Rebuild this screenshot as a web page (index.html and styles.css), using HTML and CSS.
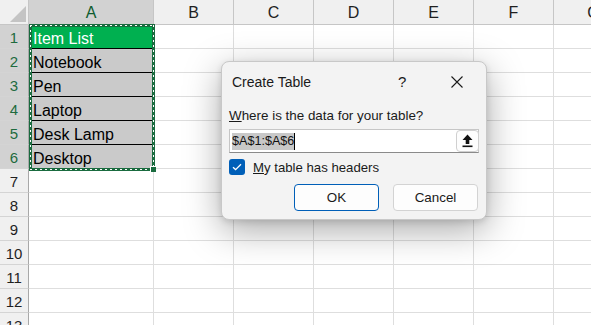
FILE: index.html
```html
<!DOCTYPE html>
<html>
<head>
<meta charset="utf-8">
<link rel="stylesheet" href="styles.css">
</head>
<body>
<div class="sheet">
  <div class="grid">
    <div class="corner"><svg width="29" height="25" viewBox="0 0 29 25"><polygon points="10,22 26,6 26,22" fill="#c4c4c4"/></svg></div>
    <div class="colhdr sel">A</div>
    <div class="colhdr">B</div>
    <div class="colhdr">C</div>
    <div class="colhdr">D</div>
    <div class="colhdr">E</div>
    <div class="colhdr">F</div>
    <div class="colhdr">G</div>

    <div class="rowhdr sel">1</div><div class="cell data head">Item List</div><div class="cell"></div><div class="cell"></div><div class="cell"></div><div class="cell"></div><div class="cell"></div><div class="cell"></div>
    <div class="rowhdr sel">2</div><div class="cell data">Notebook</div><div class="cell"></div><div class="cell"></div><div class="cell"></div><div class="cell"></div><div class="cell"></div><div class="cell"></div>
    <div class="rowhdr sel">3</div><div class="cell data">Pen</div><div class="cell"></div><div class="cell"></div><div class="cell"></div><div class="cell"></div><div class="cell"></div><div class="cell"></div>
    <div class="rowhdr sel">4</div><div class="cell data">Laptop</div><div class="cell"></div><div class="cell"></div><div class="cell"></div><div class="cell"></div><div class="cell"></div><div class="cell"></div>
    <div class="rowhdr sel">5</div><div class="cell data">Desk Lamp</div><div class="cell"></div><div class="cell"></div><div class="cell"></div><div class="cell"></div><div class="cell"></div><div class="cell"></div>
    <div class="rowhdr sel">6</div><div class="cell data last">Desktop</div><div class="cell"></div><div class="cell"></div><div class="cell"></div><div class="cell"></div><div class="cell"></div><div class="cell"></div>
    <div class="rowhdr">7</div><div class="cell"></div><div class="cell"></div><div class="cell"></div><div class="cell"></div><div class="cell"></div><div class="cell"></div><div class="cell"></div>
    <div class="rowhdr">8</div><div class="cell"></div><div class="cell"></div><div class="cell"></div><div class="cell"></div><div class="cell"></div><div class="cell"></div><div class="cell"></div>
    <div class="rowhdr">9</div><div class="cell"></div><div class="cell"></div><div class="cell"></div><div class="cell"></div><div class="cell"></div><div class="cell"></div><div class="cell"></div>
    <div class="rowhdr">10</div><div class="cell"></div><div class="cell"></div><div class="cell"></div><div class="cell"></div><div class="cell"></div><div class="cell"></div><div class="cell"></div>
    <div class="rowhdr">11</div><div class="cell"></div><div class="cell"></div><div class="cell"></div><div class="cell"></div><div class="cell"></div><div class="cell"></div><div class="cell"></div>
    <div class="rowhdr">12</div><div class="cell"></div><div class="cell"></div><div class="cell"></div><div class="cell"></div><div class="cell"></div><div class="cell"></div><div class="cell"></div>
    <div class="rowhdr">13</div><div class="cell"></div><div class="cell"></div><div class="cell"></div><div class="cell"></div><div class="cell"></div><div class="cell"></div><div class="cell"></div>
  </div>

  <div class="selection"><span class="handle"></span></div>

  <div class="dialog">
    <div class="titlebar">
      <span class="title">Create Table</span>
      <span class="help">?</span>
      <span class="close"><svg width="12" height="12" viewBox="0 0 12 12"><path d="M0.5 0.5 L11.5 11.5 M11.5 0.5 L0.5 11.5" stroke="#1a1a1a" stroke-width="1.1" fill="none"/></svg></span>
    </div>
    <div class="body">
      <div class="label"><u>W</u>here is the data for your table?</div>
      <div class="input">
        <span class="value"><span class="hl">$A$1:$A$6</span><span class="caret"></span></span>
        <span class="upbtn"><svg width="11" height="14" viewBox="0 0 11 14"><path d="M5.5 0.5 L10.5 6 L7.3 6 L7.3 10 L3.7 10 L3.7 6 L0.5 6 Z" fill="#111"/><rect x="0.5" y="11.5" width="10" height="1.6" fill="#111"/></svg></span>
      </div>
      <div class="check">
        <span class="box"><svg width="10" height="8" viewBox="0 0 10 8"><path d="M1 4.2 L3.6 6.6 L9 1.2" stroke="#fff" stroke-width="1.3" fill="none"/></svg></span>
        <span class="checklabel"><u>M</u>y table has headers</span>
      </div>
      <div class="buttons">
        <span class="btn primary">OK</span>
        <span class="btn">Cancel</span>
      </div>
    </div>
  </div>
</div>
</body>
</html>
```

FILE: styles.css
```css
html, body {
  margin: 0;
  padding: 0;
  background: #ffffff;
  overflow: hidden;
}

.sheet {
  position: relative;
  width: 591px;
  height: 325px;
  overflow: hidden;
}

.grid {
  display: grid;
  grid-template-columns: 29px 125px 80px 80px 80px 80px 80px 80px;
  grid-template-rows: 25px;
  grid-auto-rows: 24px;
  font-family: "Liberation Sans", Arial, sans-serif;
}

.corner {
  background: #f0f0f0;
  border-right: 1px solid #c6c6c6;
  border-bottom: 1px solid #c6c6c6;
  box-sizing: border-box;
}

.corner svg {
  display: block;
}

.colhdr {
  box-sizing: border-box;
  background: #f0f0f0;
  border-right: 1px solid #c6c6c6;
  border-bottom: 1px solid #c6c6c6;
  display: flex;
  align-items: center;
  justify-content: center;
  font-size: 16px;
  color: #1f1f1f;
  padding-top: 1px;
}

.colhdr.sel {
  background: #d2d2d2;
  color: #0e5c2f;
}

.rowhdr {
  box-sizing: border-box;
  background: #f0f0f0;
  border-right: 1px solid #a8a8a8;
  border-bottom: 1px solid #d4d4d4;
  display: flex;
  align-items: center;
  justify-content: center;
  font-size: 15px;
  color: #1f1f1f;
  padding-top: 2px;
}

.rowhdr.sel {
  background: #d2d2d2;
  color: #1e6b3e;
}

.cell {
  box-sizing: border-box;
  border-right: 1px solid #dedede;
  border-bottom: 1px solid #dedede;
  font-size: 16px;
  line-height: 23px;
  padding: 2px 0 0 4px;
  white-space: nowrap;
  color: #000;
}

.cell.data {
  background: #cacaca;
  border-bottom: 1px solid #000;
  border-right-color: #cacaca;
}

.cell.data.last {
  border-bottom-color: #cacaca;
}

.cell.head {
  background: #00b050;
  color: #ffffff;
  border-right-color: #00b050;
}

.selection {
  position: absolute;
  left: 29px;
  top: 24px;
  width: 126px;
  height: 147px;
  box-sizing: border-box;
  border: 3px solid #1a6b3f;
}

.selection::before {
  content: "";
  position: absolute;
  left: -2px;
  top: -2px;
  right: -2px;
  bottom: -2px;
  background:
    repeating-linear-gradient(90deg, #ffffff 0 2px, transparent 2px 5px) top left / 100% 1px no-repeat,
    repeating-linear-gradient(90deg, #ffffff 0 2px, transparent 2px 5px) bottom left / 100% 1px no-repeat,
    repeating-linear-gradient(180deg, #ffffff 0 2px, transparent 2px 5px) top left / 1px 100% no-repeat,
    repeating-linear-gradient(180deg, #ffffff 0 2px, transparent 2px 5px) top right / 1px 100% no-repeat;
}

.handle {
  position: absolute;
  right: -4px;
  bottom: -4px;
  width: 5px;
  height: 5px;
  background: #1a6b3f;
  border-left: 1px solid #ffffff;
  border-top: 1px solid #ffffff;
  z-index: 1;
}

.dialog {
  position: absolute;
  left: 221px;
  top: 61px;
  width: 266px;
  height: 159px;
  box-sizing: border-box;
  background: #f3f3f3;
  border: 1px solid #c8c8c8;
  border-radius: 8px;
  box-shadow: 0 10px 36px rgba(0, 0, 0, 0.34), 0 2px 6px rgba(0, 0, 0, 0.12);
  font-family: "Liberation Sans", Arial, sans-serif;
  color: #1a1a1a;
}

.titlebar {
  height: 39px;
  display: flex;
  align-items: center;
  padding-left: 10px;
}

.title {
  flex: 1;
  font-size: 14px;
}

.help {
  font-size: 15px;
  width: 53px;
}

.close {
  width: 35px;
  display: flex;
  align-items: center;
}

.close svg {
  display: block;
}

.body {
  display: flex;
  flex-direction: column;
  padding: 0 7px;
}

.label {
  margin-top: 7px;
  font-size: 13.4px;
  line-height: 16px;
}

.input {
  margin-top: 5px;
  height: 24px;
  box-sizing: border-box;
  background: #ffffff;
  border: 1px solid #c6c6c6;
  border-bottom-color: #8a8a8a;
  display: flex;
  align-items: center;
  justify-content: space-between;
}

.value {
  display: flex;
  align-items: center;
  padding-left: 2px;
  font-size: 12.6px;
}

.hl {
  background: #c8c8c8;
  line-height: 17px;
  color: #111;
}

.caret {
  width: 1px;
  height: 17px;
  background: #000;
}

.upbtn {
  width: 23px;
  height: 22px;
  box-sizing: border-box;
  border: 1px solid #d0d0d0;
  border-radius: 4px;
  background: #fdfdfd;
  display: flex;
  align-items: center;
  justify-content: center;
  margin-right: -1px;
}

.upbtn svg {
  display: block;
}

.check {
  margin-top: 6px;
  height: 16px;
  display: flex;
  align-items: center;
  gap: 8px;
}

.box {
  width: 16px;
  height: 16px;
  border-radius: 3px;
  background: #005fb8;
  display: flex;
  align-items: center;
  justify-content: center;
}

.box svg {
  display: block;
}

.checklabel {
  font-size: 13.2px;
}

.buttons {
  margin-top: 9px;
  display: flex;
  justify-content: flex-end;
  gap: 14px;
  padding-right: 1px;
}

.btn {
  width: 85px;
  height: 27px;
  box-sizing: border-box;
  border: 1px solid #d3d3d3;
  border-radius: 4px;
  background: #fdfdfd;
  display: flex;
  align-items: center;
  justify-content: center;
  font-size: 13.4px;
}

.btn.primary {
  border-color: #005fb8;
}
```
